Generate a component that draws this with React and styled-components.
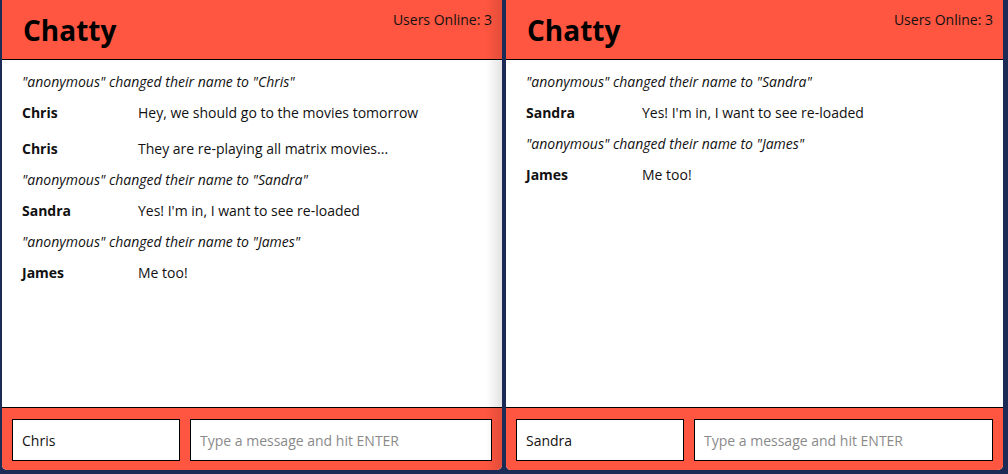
import styled, { createGlobalStyle } from 'styled-components';

const ORANGE = '#fe5640';

const GlobalStyle = createGlobalStyle`
  html, body {
    margin: 0;
    padding: 0;
    background: #1b2b55;
    font-family: "Open Sans", "Liberation Sans", sans-serif;
  }
`;

const Desktop = styled.div`
  display: flex;
  gap: 4px;
  height: 474px;
  padding: 0 5px 4px 2px;
  box-sizing: border-box;
  background: #1b2b55;
`;

const Window = styled.div`
  position: relative;
  display: flex;
  flex-direction: column;
  width: ${p => p.$width}px;
  height: 470px;
  background: #fff;
  border-radius: 0 0 5px 5px;
  overflow: hidden;

  ${p => p.$shaded && `
    &::after {
      content: '';
      position: absolute;
      top: 0;
      right: 0;
      width: 16px;
      height: 100%;
      background: linear-gradient(to right, rgba(0,0,0,0), rgba(0,0,0,0.11));
      pointer-events: none;
    }
  `}
`;

const NavBar = styled.nav`
  display: flex;
  justify-content: space-between;
  align-items: flex-start;
  height: 59px;
  padding: 0 10px 0 21px;
  background: ${ORANGE};
  border-bottom: 1px solid #000;
  flex-shrink: 0;
`;

const Brand = styled.h1`
  margin: 0;
  font-size: 28px;
  font-weight: 700;
  line-height: 60px;
  color: #000;
`;

const Online = styled.span`
  font-size: 14px;
  line-height: 19px;
  padding-top: 10px;
  color: #111;
`;

const MessageList = styled.main`
  flex: 1;
  padding: 6px 20px 0 20px;
  overflow: hidden;
`;

const System = styled.div`
  font-size: 14px;
  font-style: italic;
  line-height: 19px;
  padding: 6px 0;
  color: #111;
`;

const Message = styled.div`
  display: flex;
  font-size: 14px;
  line-height: 19px;
  padding: 6px 0 ${p => 6 + (p.$extra || 0)}px;
  color: #111;
`;

const Username = styled.span`
  width: 116px;
  flex-shrink: 0;
  font-weight: 700;
`;

const Content = styled.span``;

const ChatBar = styled.footer`
  display: flex;
  gap: 10px;
  height: 63px;
  padding: 11px 10px 9px;
  box-sizing: border-box;
  background: ${ORANGE};
  border-top: 1px solid #000;
  flex-shrink: 0;
`;

const Input = styled.input`
  box-sizing: border-box;
  height: 42px;
  width: ${p => p.$width}px;
  flex: ${p => (p.$grow ? 1 : 'none')};
  border: 1px solid #000;
  padding: 0 9px;
  font-family: "Open Sans", "Liberation Sans", sans-serif;
  font-size: 14px;
  color: #111;
  background: #fff;
  outline: none;

  &::placeholder {
    color: #8a8a8a;
  }
`;

const leftMessages = [
  { type: 'system', text: '"anonymous" changed their name to "Chris"' },
  { user: 'Chris', text: 'Hey, we should go to the movies tomorrow', extra: 5 },
  { user: 'Chris', text: 'They are re-playing all matrix movies...' },
  { type: 'system', text: '"anonymous" changed their name to "Sandra"' },
  { user: 'Sandra', text: "Yes! I'm in, I want to see re-loaded" },
  { type: 'system', text: '"anonymous" changed their name to "James"' },
  { user: 'James', text: 'Me too!' },
];

const rightMessages = [
  { type: 'system', text: '"anonymous" changed their name to "Sandra"' },
  { user: 'Sandra', text: "Yes! I'm in, I want to see re-loaded" },
  { type: 'system', text: '"anonymous" changed their name to "James"' },
  { user: 'James', text: 'Me too!' },
];

const ChatWindow = ({ width, shaded, name, messages }) => (
  <Window $width={width} $shaded={shaded}>
    <NavBar>
      <Brand>Chatty</Brand>
      <Online>Users Online: 3</Online>
    </NavBar>
    <MessageList>
      {messages.map((m, i) =>
        m.type === 'system' ? (
          <System key={i}>{m.text}</System>
        ) : (
          <Message key={i} $extra={m.extra}>
            <Username>{m.user}</Username>
            <Content>{m.text}</Content>
          </Message>
        )
      )}
    </MessageList>
    <ChatBar>
      <Input $width={168} defaultValue={name} />
      <Input $grow placeholder="Type a message and hit ENTER" />
    </ChatBar>
  </Window>
);

const App = () => (
  <>
    <GlobalStyle />
    <Desktop>
      <ChatWindow width={500} shaded name="Chris" messages={leftMessages} />
      <ChatWindow width={497} name="Sandra" messages={rightMessages} />
    </Desktop>
  </>
);

export default App;
